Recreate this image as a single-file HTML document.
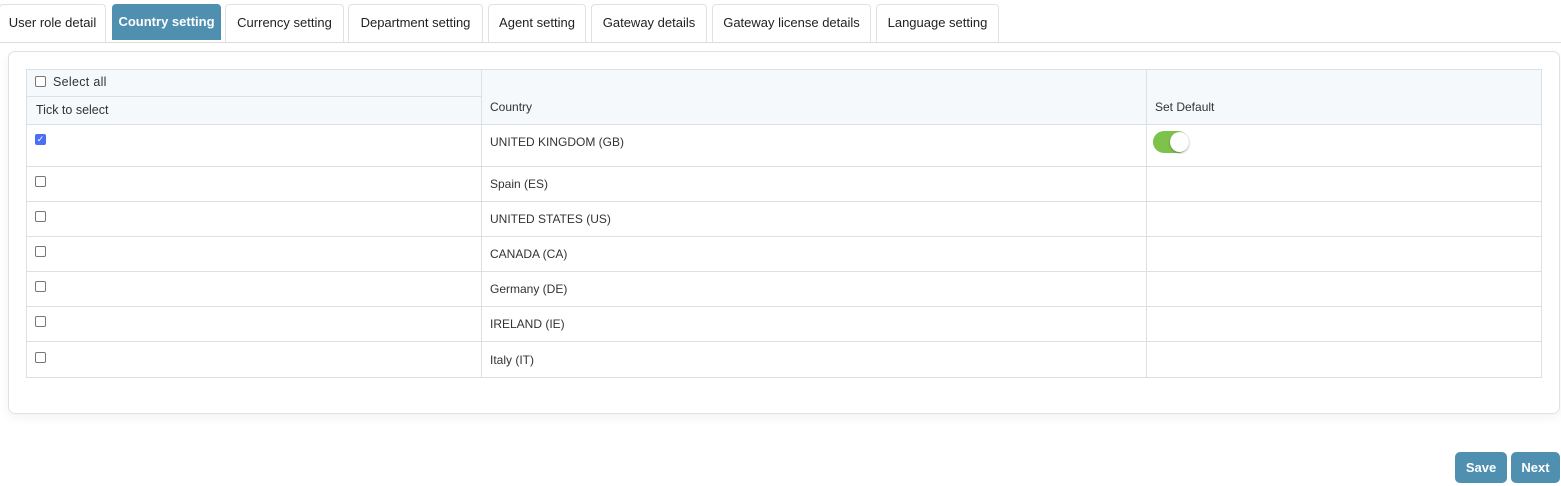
<!DOCTYPE html>
<html><head><style>
*{box-sizing:border-box;margin:0;padding:0}
body{width:1561px;height:486px;background:#fff;font-family:"Liberation Sans",sans-serif;color:#333;position:relative;overflow:hidden}
.tab{position:absolute;top:4px;height:38px;border:1px solid #dee2e6;border-bottom:none;border-radius:4px 4px 0 0;font-size:13px;line-height:36px;text-align:center;color:#222;background:#fff}
.tab.a{background:#4f8fb0;color:#fff;border-color:#4f8fb0;height:36px;line-height:34px;font-weight:bold}
.bar{position:absolute;left:0;right:0;top:42px;height:1px;background:#dcdcdc}
.card{position:absolute;left:8px;top:51px;width:1552px;height:363px;border:1px solid #dfe1e4;border-radius:7px;box-shadow:0 4px 10px rgba(0,0,0,0.05)}
.ln{position:absolute;background:#dcdfe3}
.t{position:absolute;font-size:12px;color:#333}
.cb{position:absolute;width:11px;height:11px;border:1px solid #777;border-radius:2px;background:#fff}
.btn{position:absolute;top:452px;height:31px;background:#4f8fb0;color:#fff;font-size:13px;font-weight:bold;border-radius:5px;line-height:31px;text-align:center}
</style></head><body>
<div class="tab" style="left:-1px;width:107px">User role detail</div>
<div class="tab a" style="left:112px;width:109px">Country setting</div>
<div class="tab" style="left:225px;width:119px">Currency setting</div>
<div class="tab" style="left:348px;width:135px">Department setting</div>
<div class="tab" style="left:488px;width:98px">Agent setting</div>
<div class="tab" style="left:591px;width:116px">Gateway details</div>
<div class="tab" style="left:712px;width:159px">Gateway license details</div>
<div class="tab" style="left:876px;width:123px">Language setting</div>
<div class="bar"></div>
<div class="card"></div>
<div style="position:absolute;left:26px;top:69px;width:1515px;height:55px;background:#f5f9fc"></div>
<div class="ln" style="left:26px;top:69px;width:1516px;height:1px"></div>
<div class="ln" style="left:26px;top:96px;width:455px;height:1px"></div>
<div class="ln" style="left:26px;top:124px;width:1516px;height:1px"></div>
<div class="ln" style="left:26px;top:166px;width:1516px;height:1px"></div>
<div class="ln" style="left:26px;top:201px;width:1516px;height:1px"></div>
<div class="ln" style="left:26px;top:236px;width:1516px;height:1px"></div>
<div class="ln" style="left:26px;top:271px;width:1516px;height:1px"></div>
<div class="ln" style="left:26px;top:306px;width:1516px;height:1px"></div>
<div class="ln" style="left:26px;top:341px;width:1516px;height:1px"></div>
<div class="ln" style="left:26px;top:377px;width:1516px;height:1px"></div>
<div class="ln" style="left:26px;top:69px;width:1px;height:309px"></div>
<div class="ln" style="left:481px;top:69px;width:1px;height:309px"></div>
<div class="ln" style="left:1146px;top:69px;width:1px;height:309px"></div>
<div class="ln" style="left:1541px;top:69px;width:1px;height:309px"></div>
<div class="cb" style="left:35px;top:76px"></div>
<div class="t" style="left:53px;top:75px;font-size:12.5px;letter-spacing:.3px">Select all</div>
<div class="t" style="left:36px;top:103px;font-size:12.5px">Tick to select</div>
<div class="t" style="left:490px;top:100px">Country</div>
<div class="t" style="left:1155px;top:100px">Set Default</div>
<div class="cb" style="left:35px;top:134px;background:#4c6ef5;border-color:#4c6ef5;color:#fff;font-size:9px;line-height:9px;text-align:center">✓</div>
<div class="t" style="left:490px;top:135px">UNITED KINGDOM (GB)</div>
<div style="position:absolute;left:1153px;top:131px;width:36px;height:22px;border-radius:11px;background:#7dc24b"></div>
<div style="position:absolute;left:1170px;top:132px;width:19px;height:20px;border-radius:50%;background:#fff;box-shadow:0 1px 2px rgba(0,0,0,.3)"></div>
<div class="cb" style="left:35px;top:176px"></div><div class="t" style="left:490px;top:177px">Spain (ES)</div>
<div class="cb" style="left:35px;top:211px"></div><div class="t" style="left:490px;top:212px">UNITED STATES (US)</div>
<div class="cb" style="left:35px;top:246px"></div><div class="t" style="left:490px;top:247px">CANADA (CA)</div>
<div class="cb" style="left:35px;top:281px"></div><div class="t" style="left:490px;top:282px">Germany (DE)</div>
<div class="cb" style="left:35px;top:316px"></div><div class="t" style="left:490px;top:317px">IRELAND (IE)</div>
<div class="cb" style="left:35px;top:352px"></div><div class="t" style="left:490px;top:353px">Italy (IT)</div>
<div class="btn" style="left:1455px;width:52px">Save</div>
<div class="btn" style="left:1511px;width:49px">Next</div>
</body></html>
